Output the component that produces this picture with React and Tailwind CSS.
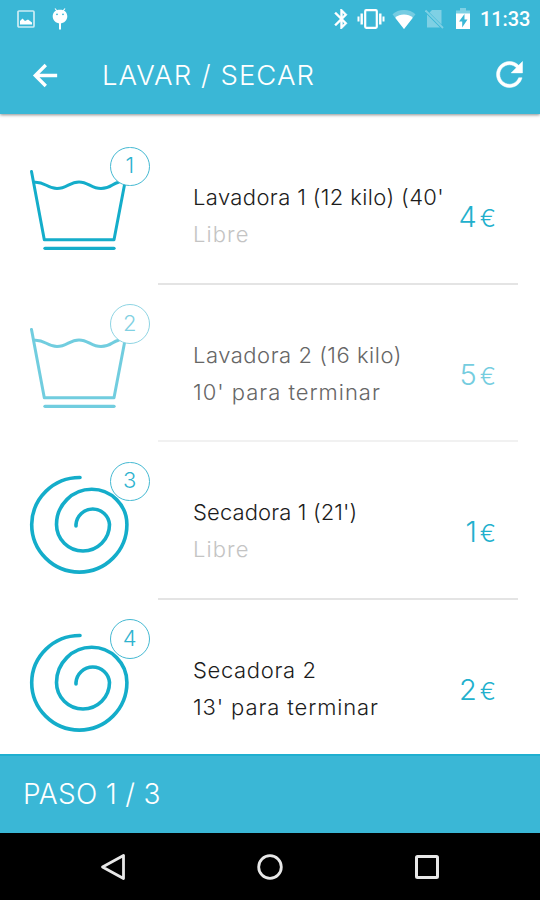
import clsx from "clsx";

const machines = [
  {
    id: 1,
    type: "washer",
    name: "Lavadora 1 (12 kilo) (40'",
    nameTracking: "tracking-[0.38px]",
    status: "Libre",
    statusTracking: "tracking-[1.1px]",
    free: true,
    price: 4,
  },
  {
    id: 2,
    type: "washer",
    name: "Lavadora 2 (16 kilo)",
    nameTracking: "tracking-[0.52px]",
    status: "10' para terminar",
    statusTracking: "tracking-[0.98px]",
    dimmed: true,
    price: 5,
  },
  {
    id: 3,
    type: "dryer",
    name: "Secadora 1 (21')",
    nameTracking: "tracking-[0.12px]",
    status: "Libre",
    statusTracking: "tracking-[1.1px]",
    free: true,
    price: 1,
  },
  {
    id: 4,
    type: "dryer",
    name: "Secadora 2",
    nameTracking: "tracking-[0.65px]",
    status: "13' para terminar",
    statusTracking: "tracking-[0.88px]",
    price: 2,
  },
];

function StatusBar() {
  return (
    <div className="flex h-9 items-center pl-[17px] pr-[11px] pt-px text-white">
      <svg width="18" height="18" viewBox="0 0 18 18" fill="none" className="shrink-0">
        <rect x="1" y="1" width="16" height="16" rx="1" stroke="currentColor" strokeWidth="1.7" opacity="0.75" />
        <path d="M3 14.5V11l2.5-2.500L8 11l3-1.500 4 3v2z" fill="currentColor" />
      </svg>
      <svg width="16" height="22" viewBox="0 0 16 22" className="ml-[17px] shrink-0" fill="currentColor">
        <path d="M3 .5 5 3M13 .5 11 3" stroke="currentColor" strokeWidth="1.2" />
        <path
          fillRule="evenodd"
          d="M8 1.800c4.500 0 7.300 2.700 7.300 6.500S12.200 15.500 8 15.500.7 12.100.7 8.300 3.500 1.800 8 1.800zM5 5.400a.9.9 0 1 0 0 1.800.9.9 0 0 0 0-1.800zm6 0a.9.9 0 1 0 0 1.800.9.9 0 0 0 0-1.800z"
        />
        <path d="M7 15h2v6.500H7z" />
      </svg>

      <div className="ml-auto flex items-center">
        <svg width="14" height="20" viewBox="5 2 13 20" className="shrink-0" fill="currentColor">
          <path
            stroke="currentColor"
            strokeWidth="0.4"
            d="M17.71 7.71L12 2h-1v7.59L6.41 5 5 6.41 10.59 12 5 17.59 6.41 19 11 14.41V22h1l5.71-5.71-4.3-4.29 4.3-4.29zM13 5.83l1.88 1.88L13 9.59V5.83zm1.88 10.46L13 18.17v-3.76l1.88 1.88z"
          />
        </svg>
        <svg width="28" height="20" viewBox="0 0 28 20" className="ml-[9px] shrink-0" fill="none" stroke="currentColor">
          <rect x="8.200" y="1.200" width="11.600" height="17.600" rx="1" strokeWidth="2.200" />
          <path d="M4.700 4.500v11M23.300 4.500v11" strokeWidth="2.400" />
          <path d="M1.500 7.500v5M26.500 7.500v5" strokeWidth="2" />
        </svg>
        <svg width="24" height="20" viewBox="0 0 24 20" className="ml-[7px] shrink-0" fill="currentColor">
          <path d="M12 20 .5 5.200C3.500 2.500 7.500 1 12 1s8.500 1.500 11.500 4.200z" opacity="0.3" />
          <path d="M12 20 3.200 8.700C5.600 6.700 8.600 5.500 12 5.500s6.400 1.200 8.800 3.200z" />
        </svg>
        <svg width="19" height="20" viewBox="0 0 19 20" className="ml-[9px] shrink-0 opacity-35" fill="currentColor">
          <path d="M7 1h9.500v14.500L4.500 3.500zM2 5.500 15 18.500H2z" />
          <path d="M.5 1.500 18 19" stroke="currentColor" strokeWidth="1.800" />
        </svg>
        <svg width="14" height="21" viewBox="0 0 14 21" className="ml-[12px] shrink-0" fill="currentColor">
          <path d="M4 0h6v2.500h4V6H0V2.500h4z" opacity="0.35" />
          <path fillRule="evenodd" d="M0 5.500h14V21H0zM8.500 6 3 13.500h3.200V19.500L11.500 11.500H8.500z" />
        </svg>
        <span className="ml-[10px] w-[49px] whitespace-nowrap font-['Roboto',sans-serif] text-[20px] font-medium leading-9 tracking-[-0.1px]">
          11:33
        </span>
      </div>
    </div>
  );
}

function WasherIcon() {
  return (
    <g strokeWidth="3" strokeLinecap="round" strokeLinejoin="round">
      <path d="M31.500 44.500 44.300 112.700H114l10.700-56" />
      <path d="M34.500 55.200C45 54.500 47 61.500 57 61.500s12.500-6.600 22-6.600 12 6.600 22 6.600 11-5 17.500-6.300" />
      <path d="M45 121.300h69" strokeWidth="3.300" />
    </g>
  );
}

function DryerIcon() {
  return (
    <path
      d="M80 35.500A48 47.500 0 0 0 31.700 82.500a47.600 47.600 0 0 0 95.200 0a35.200 35.200 0 0 0-70.400 0a26.500 26.500 0 0 0 53 0a16.800 16.800 0 0 0-33.500 0v1.500"
      strokeWidth="3.600"
      strokeLinecap="round"
    />
  );
}

function MachineRow({ machine, last }) {
  return (
    <li className="flex h-[157.5px] shrink-0">
      <div className={clsx("relative w-[158px] shrink-0", machine.dimmed && "opacity-60")}>
        <svg width="158" height="157" viewBox="0 0 158 157" fill="none" stroke="#14adca">
          {machine.type === "washer" ? <WasherIcon /> : <DryerIcon />}
        </svg>
        <span className="absolute left-[110px] top-[19.5px] flex size-[39.5px] items-center justify-center rounded-full border-[1.4px] border-[#45b9d2] bg-white pb-px text-[22px] font-light text-[#2fb3cf]">
          {machine.id}
        </span>
      </div>
      <div
        className={clsx(
          "mr-[22px] flex flex-1 pl-9 pr-[22px]",
          !last && "border-b-2",
          machine.dimmed ? "border-[#f1f1f1]" : "border-[#e4e4e4]"
        )}
      >
        <div
          className={clsx(
            "-ml-px min-w-0 flex-1 whitespace-nowrap pt-[52px] text-[22px] font-light leading-[37px]",
            machine.dimmed ? "text-[#666]" : "text-[#1c1c1c]"
          )}
        >
          <p className={machine.nameTracking}>{machine.name}</p>
          <p className={clsx(machine.statusTracking, machine.free && "text-[#c4c4c4]")}>{machine.status}</p>
        </div>
        <div
          className={clsx(
            "flex items-baseline gap-[3px] pt-[70px] font-light leading-[40px]",
            machine.dimmed ? "text-[#75cddf]" : "text-[#22b0cd]"
          )}
        >
          <span className="text-[29px]">{machine.price}</span>
          <span className="text-[24px]">€</span>
        </div>
      </div>
    </li>
  );
}

export default function App() {
  return (
    <div className="flex h-[900px] w-[540px] flex-col overflow-hidden bg-white font-['Inter',sans-serif]">
      <header className="z-10 h-[114px] shrink-0 bg-[#3ab7d6] text-white shadow-[0_1px_3px_rgba(0,0,0,0.45)]">
        <StatusBar />
        <div className="flex h-[78px] items-center pl-[28px] pr-[11px]">
          <svg width="35" height="35" viewBox="0 0 24 24" fill="none" stroke="currentColor" strokeWidth="2.300">
            <path d="M20 12H5.500M12.200 4.800 5 12l7.200 7.200" />
          </svg>
          <h1 className="ml-[39px] whitespace-nowrap pt-0.5 text-[27.5px] font-light tracking-[1.08px]">LAVAR / SECAR</h1>
          <svg width="39" height="39" viewBox="0 0 24 24" className="-mt-0.5 ml-auto" fill="currentColor">
            <path
              stroke="currentColor"
              strokeWidth="0.300"
              d="M17.65 6.35C16.2 4.9 14.21 4 12 4c-4.42 0-7.99 3.58-7.99 8s3.57 8 7.99 8c3.73 0 6.84-2.55 7.73-6h-2.08c-.82 2.33-3.04 4-5.65 4-3.31 0-6-2.69-6-6s2.69-6 6-6c1.66 0 3.14.69 4.22 1.78L13 11h7V4l-2.35 2.35z"
            />
          </svg>
        </div>
      </header>

      <ul className="flex min-h-0 flex-1 flex-col overflow-hidden pt-[13px]">
        {machines.map((m, i) => (
          <MachineRow key={m.id} machine={m} last={i === machines.length - 1} />
        ))}
      </ul>

      <footer className="flex h-[79px] shrink-0 items-center border-t-2 border-[#1fafd0] bg-[#3ab7d6] pb-0.5 pl-[23px] text-[28px] font-light text-white">
        <span className="whitespace-nowrap tracking-[0.3px]">PASO 1 / 3</span>
      </footer>

      <nav className="flex h-[67px] shrink-0 items-center justify-between bg-black pl-[100px] pr-[100px] text-[#e8e8e8]">
        <svg width="26" height="28" viewBox="0 0 26 28" fill="none" stroke="currentColor" strokeWidth="2.800" strokeLinejoin="round">
          <path d="M2.500 14 23.500 2.500v23z" />
        </svg>
        <svg width="26" height="26" viewBox="0 0 26 26" fill="none" stroke="currentColor" strokeWidth="2.800">
          <circle cx="13" cy="13" r="11.300" />
        </svg>
        <svg width="26" height="26" viewBox="0 0 26 26" fill="none" stroke="currentColor" strokeWidth="3">
          <rect x="2.500" y="2.500" width="21" height="21" rx="1" />
        </svg>
      </nav>
    </div>
  );
}
